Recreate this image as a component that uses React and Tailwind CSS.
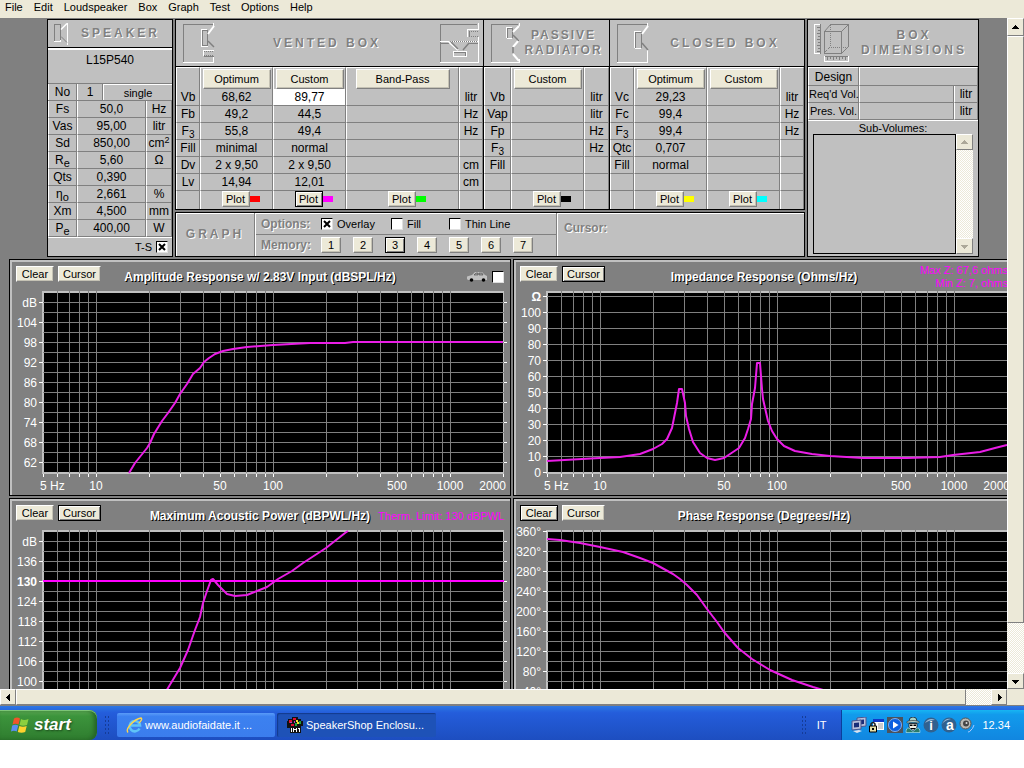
import { useState } from 'react';
import clsx from 'clsx';

const menuItems = ['File', 'Edit', 'Loudspeaker', 'Box', 'Graph', 'Test', 'Options', 'Help'];

const speakerRows = [
  { label: 'Fs', value: '50,0', unit: 'Hz' },
  { label: 'Vas', value: '95,00', unit: 'litr' },
  { label: 'Sd', value: '850,00', unit: <>cm<sup className="text-[9px]">2</sup></> },
  { label: <>R<sub className="text-[11px]">e</sub></>, value: '5,60', unit: 'Ω' },
  { label: 'Qts', value: '0,390', unit: '' },
  { label: <>η<sub className="text-[11px]">o</sub></>, value: '2,661', unit: '%' },
  { label: 'Xm', value: '4,500', unit: 'mm' },
  { label: <>P<sub className="text-[11px]">e</sub></>, value: '400,00', unit: 'W' },
];

const f3 = <>F<sub className="text-[10px]">3</sub></>;

const ventedBox = {
  labels: ['Vb', 'Fb', f3, 'Fill', 'Dv', 'Lv'],
  units: ['litr', 'Hz', 'Hz', '', 'cm', 'cm'],
  columns: [
    { title: 'Optimum', width: 'w-[73px]', color: 'bg-[#ff0000]', values: ['68,62', '49,2', '55,8', 'minimal', '2 x 9,50', '14,94'] },
    { title: 'Custom', width: 'w-[73px]', color: 'bg-[#ff00ff]', active: true, values: ['89,77', '44,5', '49,4', 'normal', '2 x 9,50', '12,01'] },
    { title: 'Band-Pass', width: 'w-[113px]', color: 'bg-[#00ff00]', wide: true, values: [] },
  ],
};

const passiveBox = {
  labels: ['Vb', 'Vap', 'Fp', f3, 'Fill', ''],
  units: ['litr', 'litr', 'Hz', 'Hz', '', ''],
  columns: [{ title: 'Custom', width: 'w-[73px]', color: 'bg-black', values: [] }],
};

const closedBox = {
  labels: ['Vc', 'Fc', f3, 'Qtc', 'Fill', ''],
  units: ['litr', 'Hz', 'Hz', '', '', ''],
  columns: [
    { title: 'Optimum', width: 'w-[73px]', color: 'bg-[#ffff00]', values: ['29,23', '99,4', '99,4', '0,707', 'normal', ''] },
    { title: 'Custom', width: 'w-[73px]', color: 'bg-[#00ffff]', values: [] },
  ],
};

const fullAxis = { 5: '5 Hz', 10: '10', 50: '50', 100: '100', 500: '500', 1000: '1000', 2000: '2000' };

const charts = [
  {
    title: 'Amplitude Response w/ 2.83V Input (dBSPL/Hz)',
    car: true,
    axis: fullAxis,
    gridStart: 16,
    gridStep: 10,
    labels: ['dB', '104', '98', '92', '86', '80', '74', '68', '62'],
    labelStart: 16,
    labelStep: 20,
    curve: '117,187 123,177 135,162 138,157 142,148 150,135 156,127 163,117 168,108 175,98 181,88 188,82 192,76 197,72 203,68 211,65 221,63 235,61 261,59 298,57 333,57 341,56 491,56',
  },
  {
    title: 'Impedance Response (Ohms/Hz)',
    active: 'Cursor',
    notes: ['Max Z: 67,6 ohms', 'Min Z: 7, ohms'],
    axis: fullAxis,
    gridStart: 10,
    gridStep: 16,
    labels: ['Ω', '100', '90', '80', '70', '60', '50', '40', '30', '20', '10', '0'],
    labelStart: 10,
    labelStep: 16,
    curve: '31,175 66,173 84,172 104,171 124,168 137,163 146,158 151,153 156,142 158,132 161,117 163,103 166,103 169,117 170,130 173,143 177,156 184,167 191,172 199,174 208,172 217,166 223,162 229,152 232,143 235,133 236,118 239,102 241,77 244,77 246,103 247,113 252,135 256,145 261,153 268,160 279,165 296,168 314,170 347,172 391,172 424,171 437,169 464,166 479,162 491,159',
  },
  {
    title: 'Maximum Acoustic Power (dBPWL/Hz)',
    active: 'Cursor',
    notes: ['Therm. Limit: 130 dBPWL'],
    axis: {},
    gridStart: 16,
    gridStep: 10,
    labels: ['dB', '136', '130', '124', '118', '112', '106', '100'],
    boldLabel: '130',
    labelStart: 16,
    labelStep: 20,
    limit: 56,
    curve: '142,186 156,163 168,143 176,125 183,105 188,92 191,78 195,66 199,55 201,54 206,60 215,69 223,71 235,70 245,66 255,62 266,54 280,46 291,38 314,23 333,8 336,6',
  },
  {
    title: 'Phase Response (Degrees/Hz)',
    active: 'Clear',
    axis: {},
    gridStart: 16,
    gridStep: 10,
    labels: ['360°', '320°', '280°', '240°', '200°', '160°', '120°', '80°', '40°'],
    labelStart: 6,
    labelStep: 20,
    curve: '31,14 44,15 64,18 84,22 107,27 124,33 137,38 157,49 164,54 171,60 181,70 191,84 201,97 208,107 222,123 236,134 254,145 276,155 297,162 314,167 400,186',
  },
];

const freqTicks = [5, 6, 7, 8, 9, 10, 20, 30, 40, 50, 60, 70, 80, 90, 100, 200, 300, 400, 500, 600, 700, 800, 900, 1000, 2000];

// 177px per decade, 10 Hz sits at x = 84
const freqX = (f) => Math.round(84 + 177 * Math.log10(f / 10));

const PushButton = ({ children, active, className, ...props }) => (
  <button
    type="button"
    className={clsx(
      'flex items-center justify-center bg-[#ece9d8] text-[11px] leading-3 text-black border',
      active
        ? 'border-black shadow-[inset_1px_1px_#fff,inset_-1px_-1px_#808080]'
        : 'border-t-white border-l-white border-r-[#808080] border-b-[#808080] shadow-[inset_-1px_-1px_#c5c2b4]',
      className,
    )}
    {...props}
  >
    {children}
  </button>
);

const CheckBox = ({ label, hideLabel, before, defaultChecked }) => (
  <label className="flex items-center gap-1 text-[11px] leading-3">
    {before}
    <span className="grid">
      <input
        type="checkbox"
        aria-label={hideLabel}
        defaultChecked={defaultChecked}
        className="peer [grid-area:1/1] size-3 appearance-none border border-t-black border-l-black border-r-[#dfdfdf] border-b-[#dfdfdf] bg-white"
      />
      <svg viewBox="0 0 12 12" className="pointer-events-none hidden size-3 [grid-area:1/1] peer-checked:block">
        <path d="M3 3l6 6M9 3l-6 6" stroke="#000" strokeWidth="2" />
      </svg>
    </span>
    {label}
  </label>
);

const PanelTitle = ({ children, tight, className }) => (
  <h2
    className={clsx(
      'text-center text-xs font-bold leading-[15px] text-[#808080] [text-shadow:1px_1px_#fff]',
      tight ? 'tracking-[2px]' : 'tracking-[3px]',
      className,
    )}
  >
    {children}
  </h2>
);

const SpeakerIcon = () => (
  <svg width="16" height="22" viewBox="0 0 16 22" fill="none" shapeRendering="crispEdges">
    <path d="M1.500 19V1.500H7.500V17" stroke="#808080" />
    <path d="M1 18.500H7.500V17M14.500 0v22" stroke="#fff" />
    <path d="M8 6.500L14 .5" stroke="#fff" strokeWidth="1.500" shapeRendering="auto" />
    <path d="M8 13.500l6 6" stroke="#808080" shapeRendering="auto" />
  </svg>
);

const VentedIcon = () => (
  <svg width="33" height="41" viewBox="0 0 33 41" fill="none" shapeRendering="crispEdges">
    <path d="M1.500 39V1.500H31M20.500 22V7.500H25.500V22z" stroke="#808080" />
    <path d="M1 39.500H31.500V33M31.500 0v4M19.500 23V6.500H25M19 23.500h7M21.500 33V27.500H32" stroke="#fff" />
    <path d="M26 11l6-8" stroke="#fff" strokeWidth="2" shapeRendering="auto" />
    <path d="M26 18l6 6" stroke="#808080" strokeWidth="1.500" shapeRendering="auto" />
    <path d="M22 28.500h10M22 32.500h10" stroke="#808080" strokeDasharray="1 1" />
    <path d="M22 33.500h10" stroke="#808080" />
  </svg>
);

const BandPassIcon = () => (
  <svg width="41" height="41" viewBox="0 0 41 41" fill="none" shapeRendering="crispEdges">
    <path d="M1.500 39V1.500H38M1 20.500h10M29 20.500h10M15 29.500h11v4M30 8v6" stroke="#808080" />
    <path d="M1 39.500H39.500V20M39.500 0v6.500H28.500V14M39.500 14v6M1 18.500h9M14.500 28v5.500H27V28.500H15" stroke="#fff" />
    <path d="M30 13.500h9M11 18.500h28M30 8.500h9" stroke="#808080" strokeDasharray="1 1" />
    <path d="M11 18.500h28" stroke="#fff" strokeDasharray="1 1" strokeDashoffset="1" />
    <path d="M10 19l9 8" stroke="#fff" strokeWidth="2" shapeRendering="auto" />
    <path d="M30 20l-6 7M12 19l7 7" stroke="#808080" strokeWidth="1.500" shapeRendering="auto" />
  </svg>
);

const PassiveIcon = () => (
  <svg width="31" height="41" viewBox="0 0 31 41" fill="none" shapeRendering="crispEdges">
    <path d="M1.500 39V1.500H28M17.500 15V5.500H22.500V15" stroke="#808080" />
    <path d="M1 39.500H29.500V36M29.500 0v3M16.500 15V4.500H22M17 15.500h5" stroke="#fff" />
    <path d="M23 9l6-6M23 24l6-7M23 31l6 7" stroke="#fff" strokeWidth="2" shapeRendering="auto" />
    <path d="M23 12l6 6M23 24v6" stroke="#808080" strokeWidth="1.500" shapeRendering="auto" />
  </svg>
);

const ClosedIcon = () => (
  <svg width="33" height="41" viewBox="0 0 33 41" fill="none" shapeRendering="crispEdges">
    <path d="M1.500 39V1.500H31M19.500 25V9.500H25.500V25" stroke="#808080" />
    <path d="M1 39.500H31.500V27M31.500 0v4M18.500 25V8.500H25M19 25.500h6" stroke="#fff" />
    <path d="M26 11l6-8" stroke="#fff" strokeWidth="2" shapeRendering="auto" />
    <path d="M26 20l6 7" stroke="#808080" strokeWidth="1.500" shapeRendering="auto" />
  </svg>
);

const DimensionsIcon = () => (
  <svg width="36" height="41" viewBox="0 0 36 41" fill="none" shapeRendering="crispEdges">
    <path d="M10.500 8.500h17v22h-17zM16 1.500h18.500V24" stroke="#808080" />
    <path d="M10.500 8.500l6-7M27.500 8.500l7-7M27.500 30.500l7-7" stroke="#808080" shapeRendering="auto" />
    <path d="M16.500 2v22H34M16 24l-6 6" stroke="#808080" strokeDasharray="1 1" />
    <path d="M6.500 1v30M3 4.500h3M4 7.500h2M3 10.500h3M4 13.500h2M3 16.500h3M4 19.500h2M3 22.500h3M4 25.500h2M3 28.500h3" stroke="#808080" />
    <path d="M.5 31V1.500H6M1 30.500h5" stroke="#fff" />
    <path d="M10 33.500h24.500M13.500 34v3M16.500 34v2M19.500 34v3M22.500 34v2M25.500 34v3M28.500 34v2M31.500 34v3" stroke="#808080" />
    <path d="M10.500 33v5.500H34.500V33" stroke="#fff" />
  </svg>
);

const CarIcon = () => (
  <svg width="21" height="10" viewBox="0 0 21 10">
    <path d="M0 7V4.500l5-1.500 3-3h7l3 3 2 1v4H1z" fill="#c0c0c0" />
    <path d="M7 3l2-2h2v2zM12 1h3l1 2h-4z" fill="#a0a0a0" stroke="#333" strokeWidth=".5" />
    <circle cx="4.500" cy="8" r="1.800" />
    <circle cx="16.500" cy="8" r="1.800" />
  </svg>
);

const cellLine = 'border-r border-b border-l border-r-[#808080] border-b-[#808080] border-l-white p-0 text-center font-normal';

const BoxPanel = ({ header, box, labelWidth }) => (
  <section className="border-r border-black">
    <header className="flex h-[47px] items-center border-b border-black pl-[6px] pr-[3px]">{header}</header>
    <table className="table-fixed border-separate border-spacing-0 text-xs leading-4">
      <colgroup>
        <col className={labelWidth} />
        {box.columns.map((col) => (
          <col key={col.title} className={col.width} />
        ))}
        <col className={box.columns.length === 1 ? 'w-[25px]' : 'w-[24px]'} />
      </colgroup>
      <thead>
        <tr className="h-[22px]">
          <td className="border-t border-r border-l border-white border-r-[#808080] p-0" />
          {box.columns.map((col) => (
            <th key={col.title} className="border-t border-r border-l border-white border-r-[#808080] p-0">
              <PushButton className={clsx('mx-auto h-5 font-normal', col.wide ? 'w-[94px]' : 'w-[68px]')}>{col.title}</PushButton>
            </th>
          ))}
          <td className="border-t border-r border-l border-white border-r-[#808080] p-0" />
        </tr>
      </thead>
      <tbody>
        {box.labels.map((label, row) => (
          <tr key={row} className="h-[17px]">
            <th scope="row" className={cellLine}>{label}</th>
            {box.columns.map((col) => (
              <td key={col.title} className={clsx(cellLine, col.active && row === 0 && 'bg-white')}>{col.values[row]}</td>
            ))}
            <td className={cellLine}>{box.units[row]}</td>
          </tr>
        ))}
        <tr className="h-[18px]">
          <td className="border-r border-l border-l-white border-r-[#808080] p-0" />
          {box.columns.map((col) => (
            <td key={col.title} className="border-r border-l border-l-white border-r-[#808080] p-0 align-top">
              <div className="flex items-center justify-center pl-2">
                <PushButton active={col.active} className="h-4 w-7">Plot</PushButton>
                <span className={clsx('h-[6px] w-[10px]', col.color)} />
              </div>
            </td>
          ))}
          <td className="border-r border-l border-l-white border-r-[#808080] p-0" />
        </tr>
      </tbody>
    </table>
  </section>
);

const SpeakerPanel = () => (
  <section className="w-[126px] border border-black bg-[#c0c0c0]">
    <header className="flex h-7 items-center border-b border-black pl-[5px]">
      <SpeakerIcon />
      <PanelTitle className="flex-1">SPEAKER</PanelTitle>
    </header>
    <p className="h-9 border-t-2 border-b border-t-white border-b-[#808080] pt-[2px] text-center text-xs leading-4">L15P540</p>
    <div className="flex h-[17px] border-b border-[#808080] text-center text-xs leading-4">
      <span className="w-[29px] border-r border-l border-l-white border-r-[#808080]">No</span>
      <span className="w-[26px] border-r border-l border-l-white border-r-[#808080]">1</span>
      <span className="flex-1 border-t border-l border-white text-[11px] leading-4">single</span>
    </div>
    <table className="w-full table-fixed border-separate border-spacing-0 text-xs leading-4">
      <colgroup>
        <col className="w-[29px]" />
        <col />
        <col className="w-[26px]" />
      </colgroup>
      <tbody>
        {speakerRows.map((row) => (
          <tr key={row.value} className="h-[17px]">
            <th scope="row" className={cellLine}>{row.label}</th>
            <td className={cellLine}>{row.value}</td>
            <td className={cellLine}>{row.unit}</td>
          </tr>
        ))}
      </tbody>
    </table>
    <div className="flex h-[18px] items-center justify-end border-t border-white pr-1">
      <CheckBox before="T-S" hideLabel="T-S" defaultChecked />
    </div>
  </section>
);

const GraphOptions = () => {
  const [memory, setMemory] = useState(3);

  return (
    <section className="mt-[2px] flex h-[45px] border border-black bg-[#c0c0c0] shadow-[inset_1px_1px_#fff]">
      <div className="flex w-[79px] items-center justify-center border-r border-[#808080]">
        <PanelTitle>GRAPH</PanelTitle>
      </div>
      <div className="w-[302px] border-r border-l border-l-white border-r-[#808080]">
        <div className="flex h-[22px] items-center border-b border-[#808080] pl-[5px]">
          <span className="w-[60px] text-xs font-bold text-[#808080] [text-shadow:1px_1px_#fff]">Options:</span>
          <span className="w-[70px]"><CheckBox label="Overlay" defaultChecked /></span>
          <span className="w-[58px]"><CheckBox label="Fill" /></span>
          <CheckBox label="Thin Line" />
        </div>
        <div className="flex h-[19px] items-center pl-[5px]">
          <span className="w-[60px] text-xs font-bold text-[#808080] [text-shadow:1px_1px_#fff]">Memory:</span>
          <div className="flex gap-3">
            {[1, 2, 3, 4, 5, 6, 7].map((n) => (
              <PushButton key={n} active={n === memory} onClick={() => setMemory(n)} className="h-4 w-5">{n}</PushButton>
            ))}
          </div>
        </div>
      </div>
      <div className="flex-1 border-l border-white pt-[2px] pl-[6px]">
        <span className="text-xs font-bold text-[#808080] [text-shadow:1px_1px_#fff]">Cursor:</span>
      </div>
    </section>
  );
};

const Arrow = ({ dir, color = '#000' }) => (
  <svg width="7" height="7" viewBox="0 0 7 7" fill={color} shapeRendering="crispEdges">
    {dir === 'up' && <path d="M3 1h1v1h1v1h1v1h1v1H0V4h1V3h1V2h1z" />}
    {dir === 'down' && <path d="M0 2h7v1H6v1H5v1H4v1H3V5H2V4H1V3H0z" />}
    {dir === 'left' && <path d="M5 0v7H4V6H3V5H2V4H1V3h1V2h1V1h1V0z" />}
    {dir === 'right' && <path d="M2 0v7h1V6h1V5h1V4h1V3H5V2H4V1H3V0z" />}
  </svg>
);

const track = 'bg-[repeating-conic-gradient(#fff_0_25%,#ece9d8_0_50%)] bg-[length:2px_2px]';
const thumb = 'border border-t-white border-l-white border-r-[#808080] border-b-[#808080] bg-[#ece9d8]';

const DimensionsPanel = () => (
  <section className="flex w-[172px] flex-col border border-black bg-[#c0c0c0]">
    <header className="flex h-[47px] items-center border-b border-black pl-[6px]">
      <DimensionsIcon />
      <PanelTitle className="flex-1">BOX<br />DIMENSIONS</PanelTitle>
    </header>
    <table className="w-full table-fixed border-separate border-spacing-0 text-xs leading-4">
      <colgroup>
        <col className="w-[51px]" />
        <col />
        <col className="w-[24px]" />
      </colgroup>
      <tbody>
        <tr className="h-[19px]">
          <th scope="row" className={clsx(cellLine, 'border-t border-t-white')}>Design</th>
          <td colSpan={2} className={clsx(cellLine, 'border-t border-t-white')} />
        </tr>
        {["Req'd Vol.", 'Pres. Vol.'].map((label) => (
          <tr key={label} className="h-[17px]">
            <th scope="row" className={clsx(cellLine, 'text-[11px] leading-4 whitespace-nowrap')}>{label}</th>
            <td className={cellLine} />
            <td className={cellLine}>litr</td>
          </tr>
        ))}
      </tbody>
    </table>
    <div className="flex flex-1 flex-col border-t border-white px-[5px] pb-[2px]">
      <p className="h-[13px] pt-px text-center text-[11px] leading-3">Sub-Volumes:</p>
      <div className="flex flex-1">
        <div className="flex-1 border border-black" />
        <div className={clsx('flex w-[17px] flex-col justify-between', track)}>
          <button type="button" aria-label="Scroll list up" className={clsx('flex h-4 items-center justify-center', thumb)}>
            <Arrow dir="up" color="#aca899" />
          </button>
          <button type="button" aria-label="Scroll list down" className={clsx('flex h-4 items-center justify-center', thumb)}>
            <Arrow dir="down" color="#aca899" />
          </button>
        </div>
      </div>
    </div>
  </section>
);

const Plot = ({ chart }) => {
  const rows = [];
  for (let y = chart.gridStart; y < 186; y += chart.gridStep) rows.push(y);

  return (
    <svg width="498" height="209" viewBox="0 0 498 209" className="block">
      <g shapeRendering="crispEdges">
        <rect x="30" y="5" width="462" height="183" fill="#c0c0c0" />
        <rect x="32" y="7" width="459" height="179" />
        {rows.map((y) => (
          <rect key={y} x="31" y={y} width="461" height="1" fill="#808080" />
        ))}
        {freqTicks.slice(1, -1).map((f) => (
          <rect key={f} x={freqX(f)} y="5" width="1" height="182" fill="#808080" />
        ))}
        {freqTicks.map((f) => (
          <rect key={f} x={freqX(f)} y="188" width="1" height="3" fill="#fff" />
        ))}
        {chart.labels.map((label, i) => (
          <g key={label} fill="#fff">
            <rect x="27" y={chart.labelStart + i * chart.labelStep} width="4" height="1" />
            <rect x="492" y={chart.labelStart + i * chart.labelStep} width="3" height="1" />
          </g>
        ))}
      </g>
      {chart.limit && <rect x="31" y={chart.limit - 1} width="461" height="2" fill="#ff00ff" />}
      <polyline points={chart.curve} fill="none" stroke="#ea1de6" strokeWidth="2" strokeLinejoin="round" />
      <g fill="#fff" fontSize="12">
        {chart.labels.map((label, i) => (
          <text
            key={label}
            x="25"
            y={chart.labelStart + i * chart.labelStep + 5}
            textAnchor="end"
            fontWeight={label === chart.boldLabel || label === 'Ω' ? 700 : 400}
          >
            {label}
          </text>
        ))}
        {Object.entries(chart.axis).map(([f, label]) => (
          <text
            key={f}
            x={f === '5' ? 28 : f === '2000' ? 494 : freqX(f)}
            y="204"
            textAnchor={f === '5' ? 'start' : f === '2000' ? 'end' : 'middle'}
          >
            {label}
          </text>
        ))}
      </g>
    </svg>
  );
};

const ChartPanel = ({ chart }) => (
  <section className="border border-black bg-[#808080]">
    <div className="border-t-2 border-l-2 border-[#c0c0c0]">
      <header className="grid h-6 grid-cols-[1fr_auto_1fr] items-start pt-[2px] pr-[6px] pl-1">
        <div className="flex gap-1 pt-[2px]">
          <PushButton active={chart.active === 'Clear'} className="h-4 w-[38px]">Clear</PushButton>
          <PushButton active={chart.active === 'Cursor'} className="h-4 w-[43px]">Cursor</PushButton>
        </div>
        <h3 className="text-xs leading-[26px] font-bold whitespace-nowrap text-white [text-shadow:1px_1px_#000]">{chart.title}</h3>
        <div className="flex h-[26px] items-center justify-end">
          {chart.car && <CheckBox hideLabel="Car cabin response" before={<CarIcon />} />}
          {chart.notes && (
            <p className="text-right text-[11px] leading-[13px] whitespace-nowrap text-[#ff00ff]">
              {chart.notes.map((note) => (
                <span key={note} className="block">{note}</span>
              ))}
            </p>
          )}
        </div>
      </header>
      <Plot chart={chart} />
    </div>
  </section>
);

const WindowsFlag = () => (
  <svg width="19" height="18" viewBox="0 0 19 18">
    <path d="M3 2.500Q6 .5 9 2.500L7.500 8.500Q4.500 7 1.500 8.500z" fill="#f0552a" />
    <path d="M10 3Q13 5 17.500 3L16 9Q12 10.500 8.500 9z" fill="#8ccf3f" />
    <path d="M1.200 9.500Q4.500 8 7.200 9.500L5.700 15.500Q3 14 0 15.500z" fill="#5a8ef2" />
    <path d="M8.300 10Q12 11.500 15.700 10L14.200 16Q10.500 17.500 6.800 16z" fill="#ffd22e" />
  </svg>
);

const ExplorerIcon = () => (
  <svg width="17" height="17" viewBox="0 0 17 17" fill="none">
    <path d="M13.500 11.500A5.200 5.200 0 1 1 14 8.500H5" stroke="#5fc3f7" strokeWidth="2.600" />
    <path d="M2 15.500C-1 12 8 2 15 1c2 1-1 4-2 5" stroke="#ffd54a" strokeWidth="1.400" />
  </svg>
);

const AppIcon = () => (
  <svg width="16" height="16" viewBox="0 0 16 16" shapeRendering="crispEdges">
    <path d="M1 2h4V0h6v2h3v2h2v5h-2v7H3v-5H0V4h1z" fill="#111" />
    <path d="M2 3h3v3H2zM6 1h3v2H6zM4 7h3v2H4z" fill="#e01030" />
    <path d="M9 3h2v2h2v2h-3V5H9z" fill="#f8e030" />
    <path d="M12 4h2v3h-2zM8 6h2v3H8z" fill="#20a040" />
    <path d="M3 5h2v1H3zM7 4h1v2H7z" fill="#c040c0" />
    <path d="M4 11h1v4H4zM6 11h1v4H6zM7 12h2v1H7zM9 11h1v4H9zM11 11h2v1h-2zM12 12h1v3h-1z" fill="#fff" />
  </svg>
);

const TrayIcons = () => (
  <div className="flex items-center gap-[2px]">
    <svg width="16" height="16" viewBox="0 0 16 16">
      <path d="M6 1l9-1v9l-9 1z" fill="#b9bfda" stroke="#4a5590" />
      <path d="M8 3l5-.5V7L8 7.500z" fill="#1a2c78" />
      <path d="M1 4l9-1v9l-9 1z" fill="#b9bfda" stroke="#4a5590" />
      <path d="M3 6l5-.5V10l-5 .5z" fill="#1a2c78" />
      <path d="M2 14l6-1 3 1-5 2z" fill="#dde2ee" />
    </svg>
    <svg width="16" height="16" viewBox="0 0 16 16">
      <path d="M4 2h11v11H4z" fill="#fff" />
      <path d="M4 2h11v3H4z" fill="#1038c8" />
      <path d="M9 7h5M9 9h5M9 11h5" stroke="#999" />
      <path d="M2 9V7q2-3 4 0v2" fill="none" stroke="#222" strokeWidth="1.500" />
      <path d="M.5 9h7v6h-7z" fill="#e8e0a8" stroke="#000" />
      <path d="M3 11h2v2H3z" />
    </svg>
    <svg width="16" height="16" viewBox="0 0 16 16">
      <path d="M0 0h16v16H0z" fill="#4c525c" />
      <circle cx="8" cy="8" r="6.500" fill="#0b5fe0" stroke="#7fb0f0" />
      <path d="M6 4.500L11.500 8 6 11.500z" fill="#fff" />
    </svg>
    <svg width="16" height="16" viewBox="0 0 16 16">
      <path d="M4 4l1-3q3-2 6 0l1 3z" fill="#a9cfc4" stroke="#123" strokeWidth=".8" />
      <path d="M2 4.500q6-2 12 0v1.500q-6-1.500-12 0z" fill="#d8ece4" stroke="#233" strokeWidth=".6" />
      <path d="M4 6.500h8v4L8 13.500l-4-3z" fill="#f2f2e6" stroke="#111" strokeWidth=".8" />
      <path d="M5 7.500h2.500v1.500H5zM8.500 7.500H11v1.500H8.500zM6 11h4v1H6z" />
      <path d="M1 15.500q0-5 3-4.500l4 3.500 4-3.500q3-.5 3 4.500z" fill="#2b7a6a" stroke="#dff" strokeWidth=".5" />
    </svg>
    <svg width="16" height="16" viewBox="0 0 16 16">
      <circle cx="8" cy="8" r="7.500" fill="#31618f" />
      <path d="M2 6q4-6 10-3-6 0-10 3z" fill="#9db9d2" />
      <text x="8" y="13" textAnchor="middle" fontSize="13" fontWeight="700" fill="#fff">i</text>
    </svg>
    <svg width="16" height="16" viewBox="0 0 16 16">
      <circle cx="8" cy="8" r="7.500" fill="#31618f" />
      <path d="M1 7q3-6 9-5-6 1-9 5z" fill="#9db9d2" />
      <text x="9" y="13" textAnchor="middle" fontSize="14" fontWeight="700" fill="#fff">a</text>
    </svg>
    <svg width="16" height="16" viewBox="0 0 16 16">
      <circle cx="6.500" cy="6.500" r="5.500" fill="#b9b9b4" stroke="#555" />
      <circle cx="7" cy="6.500" r="3" fill="#444" />
      <circle cx="7.500" cy="6" r="1" fill="#ddd" />
      <path d="M11 14q3-2 4-6M9 15q2 0 3-2" fill="none" stroke="#a9c9ff" />
    </svg>
  </div>
);

const Grip = () => (
  <span className="h-5 w-[6px] bg-[radial-gradient(#153c98_1px,transparent_1px)] bg-[length:3px_4px]" />
);

const Taskbar = () => (
  <footer className="flex h-[34px] items-stretch bg-linear-to-b from-[#2d77e4] via-[#245ddb] via-20% to-[#1d4ec0] text-[11px] text-white">
    <div className="flex flex-1 items-end">
      <button
        type="button"
        className="flex h-[30px] w-[97px] items-center gap-1 rounded-r-lg bg-linear-to-b from-[#5eac56] via-[#3c943c] via-20% to-[#2f7d2f] pl-[11px] text-[17px] font-bold italic shadow-[inset_0_1px_#7cc576,inset_-3px_0_4px_#256325] [text-shadow:1px_1px_2px_#1c4a1c]"
      >
        <WindowsFlag />
        start
      </button>
      <div className="ml-[7px] flex h-[30px] items-center"><Grip /></div>
      <div className="ml-[7px] flex h-[30px] items-center gap-[2px]">
        <button type="button" className="flex h-6 w-[158px] items-center gap-[2px] rounded-xs bg-linear-to-b from-[#5a9bf8] via-[#3c81f0] via-15% to-[#3b7ded] pl-[9px]">
          <ExplorerIcon />
          www.audiofaidate.it ...
        </button>
        <button type="button" className="flex h-6 w-[159px] items-center gap-[3px] rounded-xs bg-[#1e52b7] pl-[10px] shadow-[inset_1px_1px_1px_#123a8c]">
          <AppIcon />
          SpeakerShop Enclosu...
        </button>
      </div>
      <div className="ml-auto flex h-[30px] items-center gap-[10px] pr-[15px]">
        <Grip />
        <span>IT</span>
      </div>
    </div>
    <div className="mt-1 flex items-center gap-[7px] border-l border-[#0b3f9c] bg-linear-to-b from-[#18b5f2] via-[#129bec] via-15% to-[#1186e0] pr-[14px] pl-[9px]">
      <TrayIcons />
      <span>12.34</span>
    </div>
  </footer>
);

const App = () => (
  <div className="flex h-screen flex-col bg-white pb-7 font-['Liberation_Sans',Arial,sans-serif] text-black">
    <nav className="flex h-[18px] shrink-0 gap-[11px] bg-[#ece9d8] pl-[5px] text-[11px] leading-[14px]">
      {menuItems.map((item) => (
        <button key={item} type="button" className="h-[14px]">{item}</button>
      ))}
    </nav>

    <div className="flex min-h-0 flex-1">
      <main className="min-w-0 flex-1 overflow-hidden bg-[#808080] pt-px">
        <div className="flex w-max gap-[2px] pl-[47px]">
          <SpeakerPanel />
          <div>
            <div className="flex border-t border-b border-l border-black bg-[#c0c0c0]">
              <BoxPanel
                labelWidth="w-[24px]"
                box={ventedBox}
                header={<><VentedIcon /><PanelTitle className="flex-1">VENTED BOX</PanelTitle><BandPassIcon /></>}
              />
              <BoxPanel
                labelWidth="w-[27px]"
                box={passiveBox}
                header={<><PassiveIcon /><PanelTitle tight className="flex-1">PASSIVE<br />RADIATOR</PanelTitle></>}
              />
              <BoxPanel
                labelWidth="w-[24px]"
                box={closedBox}
                header={<><ClosedIcon /><PanelTitle className="flex-1">CLOSED BOX</PanelTitle></>}
              />
            </div>
            <GraphOptions />
          </div>
          <DimensionsPanel />
        </div>

        <div className="mt-[2px] grid w-max grid-cols-2 gap-[2px] pl-[9px]">
          {charts.map((chart) => (
            <ChartPanel key={chart.title} chart={chart} />
          ))}
        </div>
      </main>

      <div className={clsx('flex w-[17px] flex-col', track)}>
        <button type="button" aria-label="Scroll up" className={clsx('flex h-[18px] items-center justify-center', thumb)}>
          <Arrow dir="up" />
        </button>
        <div className={clsx('flex-1', thumb)} />
        <button type="button" aria-label="Scroll down" className={clsx('mt-[50px] flex h-4 items-center justify-center', thumb)}>
          <Arrow dir="down" />
        </button>
      </div>
    </div>

    <div className="flex h-[17px] shrink-0 border-b border-[#808080] bg-[#ece9d8] pr-[17px]">
      <div className={clsx('flex flex-1', track)}>
        <button type="button" aria-label="Scroll left" className={clsx('flex w-4 items-center justify-center', thumb)}>
          <Arrow dir="left" />
        </button>
        <div className={clsx('flex-1', thumb)} />
        <button type="button" aria-label="Scroll right" className={clsx('ml-[25px] flex w-4 items-center justify-center', thumb)}>
          <Arrow dir="right" />
        </button>
      </div>
    </div>

    <Taskbar />
  </div>
);

export default App;
